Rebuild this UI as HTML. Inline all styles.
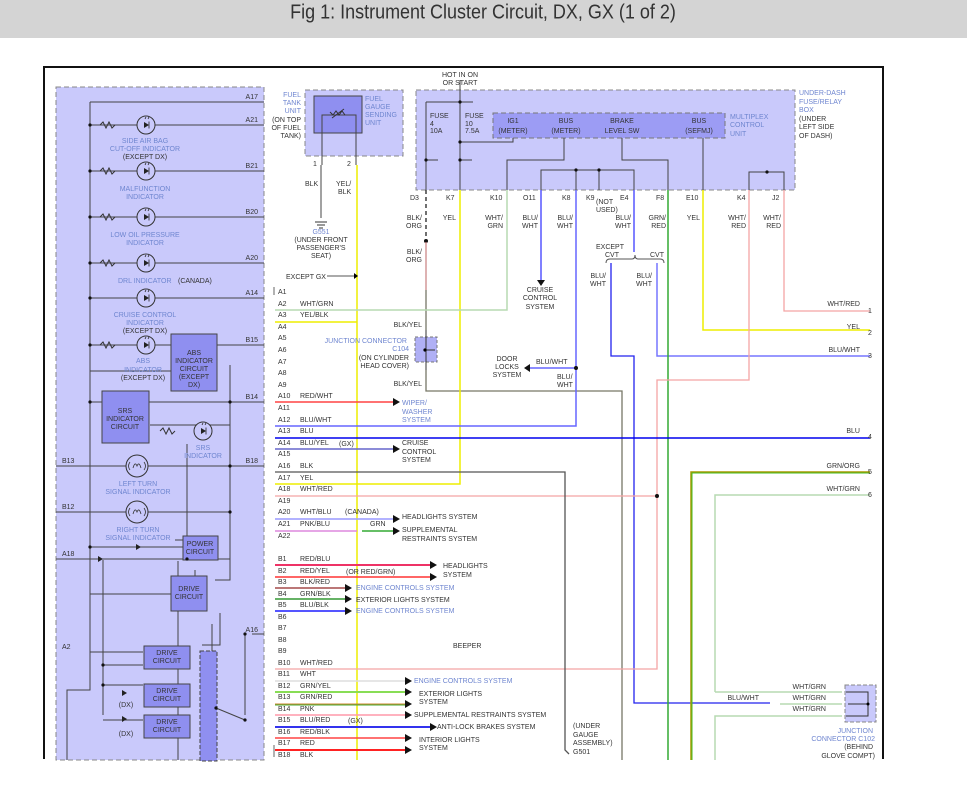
<!DOCTYPE html>
<html><head><meta charset="utf-8"><style>
html,body{margin:0;padding:0;background:#fff;width:967px;height:790px;overflow:hidden}
svg{display:block}
text{font-family:"Liberation Sans",sans-serif;font-size:7px;fill:#333}
.b{fill:#6f86d0}
.t{font-family:"Liberation Sans Narrow","Liberation Sans",sans-serif;font-size:19px;fill:#333}
</style></head><body>
<svg width="967" height="790" viewBox="0 0 967 790">
<defs>
<g id="led"><circle r="9" fill="#c9c9fb" stroke="#333"/><path d="M-2-3v6l5-3z" fill="#222"/><path d="M3-3.5v7M-1-6l1-2M2-6l1-2" stroke="#222" stroke-width="0.8"/></g>
<g id="bulb"><circle r="11" fill="#c9c9fb" stroke="#333"/><path d="M-7-4q-3 4 0 8M7-4q3 4 0 8M-4 2q2-7 4-2q2-5 4 2" stroke="#333" fill="none" stroke-width="0.8"/></g>
</defs>
<rect x="0" y="0" width="967" height="38" fill="#d4d4d4"/>
<text class="t" x="483" y="17" text-anchor="middle" style="font-size:18px" transform="scale(1,1.15) translate(0,-1)">Fig 1: Instrument Cluster Circuit, DX, GX (1 of 2)</text>
<path d="M44 759V67H883V759" fill="none" stroke="#111" stroke-width="2"/>
<rect x="56" y="87" width="208" height="673" fill="#c9c9fb" stroke="#888" stroke-dasharray="5,3"/>
<g stroke="#444" stroke-width="1" fill="none">
<path d="M90 102V690H67V760"/>
<path d="M90 102H264M90 125H264M90 171H264M90 217H264M90 263H264M90 298H264M90 345H171M215 345H264M90 371H171M90 402H264M150 425H230M90 466H264M56 466H90M56 512H230M56 559H230M90 547H183M90 594H172M90 652H143M252 634H264M212 624V760"/>
<path d="M230 365V512M230 402V466M187 444V559M175 540H217M230 512V580H215M195 570V599"/>
<path d="M220 613V645H202M245 634V715M178 561V760"/>
<path d="M103 665H143M103 685H143M103 720H143M103 560V715"/>
<path d="M216 708L245 720"/>
</g>
<use href="#led" x="146" y="125"/><use href="#led" x="146" y="171"/><use href="#led" x="146" y="217"/><use href="#led" x="146" y="263"/><use href="#led" x="146" y="298"/><use href="#led" x="146" y="345"/><use href="#led" x="203" y="431"/>
<use href="#bulb" x="137" y="466"/><use href="#bulb" x="137" y="512"/>
<g stroke="#333" fill="none"><path d="M100 125l3-3 3 6 3-6 3 6 3-3M100 171l3-3 3 6 3-6 3 6 3-3M100 217l3-3 3 6 3-6 3 6 3-3M100 263l3-3 3 6 3-6 3 6 3-3M100 345l3-3 3 6 3-6 3 6 3-3M160 431l3-3 3 6 3-6 3 6 3-3"/></g>
<g fill="#222"><path d="M136 544v6l5-3zM98 556v6l5-3zM122 690v6l5-3zM122 716v6l5-3z"/></g>
<g fill="#8f8ff0" stroke="#444">
<rect x="171" y="334" width="46" height="57"/>
<rect x="102" y="391" width="47" height="52"/>
<rect x="183" y="536" width="35" height="24"/>
<rect x="171" y="576" width="36" height="35"/>
<rect x="144" y="646" width="46" height="23"/>
<rect x="144" y="684" width="46" height="23"/>
<rect x="144" y="715" width="46" height="23"/>
<rect x="200" y="651" width="17" height="110" stroke-dasharray="4,2"/>
</g>
<g text-anchor="middle">
<text x="194" y="355">ABS</text><text x="194" y="363">INDICATOR</text><text x="194" y="371">CIRCUIT</text><text x="194" y="379">(EXCEPT</text><text x="194" y="387">DX)</text>
<text x="125" y="413">SRS</text><text x="125" y="421">INDICATOR</text><text x="125" y="429">CIRCUIT</text>
<text x="200" y="546">POWER</text><text x="200" y="554">CIRCUIT</text>
<text x="189" y="591">DRIVE</text><text x="189" y="599">CIRCUIT</text>
<text x="167" y="655">DRIVE</text><text x="167" y="663">CIRCUIT</text>
<text x="167" y="693">DRIVE</text><text x="167" y="701">CIRCUIT</text>
<text x="167" y="724">DRIVE</text><text x="167" y="732">CIRCUIT</text>
<text class="b" x="145" y="143">SIDE AIR BAG</text><text class="b" x="145" y="151">CUT-OFF INDICATOR</text><text x="145" y="159">(EXCEPT DX)</text>
<text class="b" x="145" y="191">MALFUNCTION</text><text class="b" x="145" y="199">INDICATOR</text>
<text class="b" x="145" y="237">LOW OIL PRESSURE</text><text class="b" x="145" y="245">INDICATOR</text>
<text class="b" x="145" y="317">CRUISE CONTROL</text><text class="b" x="145" y="325">INDICATOR</text><text x="145" y="333">(EXCEPT DX)</text>
<text class="b" x="143" y="363">ABS</text><text class="b" x="143" y="372">INDICATOR</text><text x="143" y="380">(EXCEPT DX)</text>
<text class="b" x="203" y="450">SRS</text><text class="b" x="203" y="458">INDICATOR</text>
<text class="b" x="138" y="486">LEFT TURN</text><text class="b" x="138" y="494">SIGNAL INDICATOR</text>
<text class="b" x="138" y="532">RIGHT TURN</text><text class="b" x="138" y="540">SIGNAL INDICATOR</text>
<text x="126" y="707">(DX)</text><text x="126" y="736">(DX)</text>
</g>
<text class="b" x="118" y="283">DRL INDICATOR</text><text x="178" y="283">(CANADA)</text>
<g text-anchor="end"><text x="258" y="99">A17</text><text x="258" y="122">A21</text><text x="258" y="168">B21</text><text x="258" y="214">B20</text><text x="258" y="260">A20</text><text x="258" y="295">A14</text><text x="258" y="342">B15</text><text x="258" y="399">B14</text><text x="258" y="463">B18</text><text x="258" y="632">A16</text></g>
<text x="62" y="463">B13</text><text x="62" y="509">B12</text><text x="62" y="556">A18</text><text x="62" y="649">A2</text>
<g fill="#111"><circle cx="90" cy="125" r="1.6"/><circle cx="90" cy="171" r="1.6"/><circle cx="90" cy="217" r="1.6"/><circle cx="90" cy="263" r="1.6"/><circle cx="90" cy="298" r="1.6"/><circle cx="90" cy="345" r="1.6"/><circle cx="90" cy="402" r="1.6"/><circle cx="230" cy="402" r="1.6"/><circle cx="230" cy="466" r="1.6"/><circle cx="230" cy="512" r="1.6"/><circle cx="103" cy="665" r="1.6"/><circle cx="103" cy="685" r="1.6"/><circle cx="245" cy="634" r="1.6"/><circle cx="216" cy="708" r="1.6"/><circle cx="245" cy="720" r="1.6"/><circle cx="187" cy="559" r="1.6"/><circle cx="90" cy="547" r="1.6"/></g>

<rect x="305" y="90" width="98" height="66" fill="#c9c9fb" stroke="#888" stroke-dasharray="5,3"/>
<rect x="314" y="96" width="48" height="37" fill="#8f8ff0" stroke="#444"/>
<path d="M322 133V115H356V133M322 133V165M356 133V165M321 165V218" stroke="#444" fill="none"/>
<path d="M330 112l3 3 3-4 3 4 3-4 3 4M332 118l12-9" stroke="#333" fill="none"/>
<path d="M357 165V760" stroke="#ee0" stroke-width="1.5"/>
<path d="M357 322H275" stroke="#ee0" stroke-width="1.5"/>
<path d="M315 222h12M317 225h8M319 228h4" stroke="#333"/>
<g text-anchor="end"><text x="301" y="97" class="b">FUEL</text><text x="301" y="105" class="b">TANK</text><text x="301" y="113" class="b">UNIT</text><text x="301" y="122">(ON TOP</text><text x="301" y="130">OF FUEL</text><text x="301" y="138">TANK)</text></g>
<text class="b" x="365" y="101">FUEL</text><text class="b" x="365" y="109">GAUGE</text><text class="b" x="365" y="117">SENDING</text><text class="b" x="365" y="125">UNIT</text>
<text x="313" y="166">1</text><text x="347" y="166">2</text>
<text x="305" y="186">BLK</text><text x="336" y="186">YEL/</text><text x="338" y="194">BLK</text>
<g text-anchor="middle"><text class="b" x="321" y="234">G551</text><text x="321" y="242">(UNDER FRONT</text><text x="321" y="250">PASSENGER'S</text><text x="321" y="258">SEAT)</text></g>
<text x="286" y="279">EXCEPT GX</text><path d="M327 276H354" stroke="#555"/><path d="M354 273l4 3-4 3z"/>

<rect x="416" y="90" width="379" height="100" fill="#c9c9fb" stroke="#888" stroke-dasharray="5,3"/>
<rect x="493" y="113" width="232" height="25" fill="#9c9cf4" stroke="#777" stroke-dasharray="5,3"/>
<g stroke="#444" fill="none">
<path d="M460 80V190M426 102H473M426 102V190M460 142H513V138M426 160H438M460 160H472M507 190V160H564V138M541 190V170H634V190M576 170V190M599 170V190M622 138V160H668V190M703 138V190M749 190V172H784V190"/>
</g>
<g fill="#111"><circle cx="460" cy="102" r="1.6"/><circle cx="460" cy="142" r="1.6"/><circle cx="460" cy="160" r="1.6"/><circle cx="426" cy="160" r="1.6"/><circle cx="576" cy="170" r="1.6"/><circle cx="599" cy="170" r="1.6"/><circle cx="767" cy="172" r="1.6"/><circle cx="426" cy="241" r="2"/></g>
<text x="430" y="118">FUSE</text><text x="430" y="126">4</text><text x="430" y="133">10A</text>
<text x="465" y="118">FUSE</text><text x="465" y="126">10</text><text x="465" y="133">7.5A</text>
<g text-anchor="middle"><text x="513" y="123">IG1</text><text x="513" y="133">(METER)</text><text x="566" y="123">BUS</text><text x="566" y="133">(METER)</text><text x="622" y="123">BRAKE</text><text x="622" y="133">LEVEL SW</text><text x="699" y="123">BUS</text><text x="699" y="133">(SEFMJ)</text>
<text x="460" y="77">HOT IN ON</text><text x="460" y="85">OR START</text></g>
<text class="b" x="730" y="119">MULTIPLEX</text><text class="b" x="730" y="127">CONTROL</text><text class="b" x="730" y="136">UNIT</text>
<text class="b" x="799" y="95">UNDER-DASH</text><text class="b" x="799" y="104">FUSE/RELAY</text><text class="b" x="799" y="112">BOX</text><text x="799" y="121">(UNDER</text><text x="799" y="129">LEFT SIDE</text><text x="799" y="138">OF DASH)</text>
<g font-size="7"><text x="410" y="200">D3</text><text x="446" y="200">K7</text><text x="490" y="200">K10</text><text x="523" y="200">O11</text><text x="562" y="200">K8</text><text x="586" y="200">K9</text><text x="620" y="200">E4</text><text x="656" y="200">F8</text><text x="686" y="200">E10</text><text x="737" y="200">K4</text><text x="772" y="200">J2</text>
<text x="596" y="204">(NOT</text><text x="596" y="212">USED)</text></g>
<g text-anchor="end"><text x="422" y="220">BLK/</text><text x="422" y="228">ORG</text><text x="456" y="220">YEL</text><text x="503" y="220">WHT/</text><text x="503" y="228">GRN</text><text x="538" y="220">BLU/</text><text x="538" y="228">WHT</text><text x="573" y="220">BLU/</text><text x="573" y="228">WHT</text><text x="631" y="220">BLU/</text><text x="631" y="228">WHT</text><text x="666" y="220">GRN/</text><text x="666" y="228">RED</text><text x="700" y="220">YEL</text><text x="746" y="220">WHT/</text><text x="746" y="228">RED</text><text x="781" y="220">WHT/</text><text x="781" y="228">RED</text>
<text x="422" y="254">BLK/</text><text x="422" y="262">ORG</text><text x="422" y="327">BLK/YEL</text><text x="422" y="386">BLK/YEL</text>
<text x="606" y="278">BLU/</text><text x="606" y="286">WHT</text><text x="652" y="278">BLU/</text><text x="652" y="286">WHT</text></g>
<g text-anchor="middle"><text x="540" y="292">CRUISE</text><text x="540" y="300">CONTROL</text><text x="540" y="309">SYSTEM</text><text x="610" y="249">EXCEPT</text><text x="612" y="257">CVT</text><text x="657" y="257">CVT</text>
<text x="507" y="361">DOOR</text><text x="507" y="369">LOCKS</text><text x="507" y="377">SYSTEM</text></g>
<text x="536" y="364">BLU/WHT</text><text x="557" y="379">BLU/</text><text x="557" y="387">WHT</text>
<path d="M606 263q0-4 4-4h22q3 0 3-4q0 4 3 4h22q4 0 4 4" stroke="#555" fill="none"/>
<rect x="415" y="337" width="22" height="25" fill="#b0b0f5" stroke="#777" stroke-dasharray="3,2"/>
<path d="M426 330V370M426 350H435" stroke="#333"/><circle cx="425" cy="350" r="1.6"/>
<g text-anchor="end"><text class="b" x="407" y="343">JUNCTION CONNECTOR</text><text class="b" x="409" y="351">C104</text><text x="409" y="360">(ON CYLINDER</text><text x="409" y="368">HEAD COVER)</text></g>

<g fill="none">
<path d="M426 190V240" stroke="#222" stroke-dasharray="4,3" stroke-width="1.3"/>
<path d="M426 242V290" stroke="#c88" stroke-width="1.3"/>
<path d="M426 290V330M426 370V391H622V760" stroke="#776" stroke-width="1.3"/>
<path d="M460 190V484H275" stroke="#ee0" stroke-width="1.5"/>
<path d="M507 190V310H275" stroke="#b7dab2" stroke-width="1.5"/>
<path d="M541 190V280" stroke="#55f" stroke-width="1.5"/>
<path d="M576 190V426H275" stroke="#66f" stroke-width="1.5"/>
<path d="M576 368H530" stroke="#66f" stroke-width="1.5"/>
<path d="M634 190V252" stroke="#55f" stroke-width="1.5"/>
<path d="M611 263V356H634V703H770" stroke="#22e" stroke-width="1.3"/>
<path d="M657 263V356H870" stroke="#77f" stroke-width="1.5"/>
<path d="M668 190V760" stroke="#3a3" stroke-width="1.5"/>
<path d="M703 190V330H870" stroke="#ee0" stroke-width="1.5"/>
<path d="M749 190V380H657V669H275" stroke="#f4a5a5" stroke-width="1.3"/>
<path d="M657 496H275" stroke="#f4a5a5" stroke-width="1.3"/>
<path d="M784 190V311H870" stroke="#f4a5a5" stroke-width="1.3"/>
<path d="M275 438H870" stroke="#00e" stroke-width="1.5"/>
<path d="M275 472H565V750l4 4" stroke="#555" stroke-width="1.3"/>
<path d="M691 760V472H870" stroke="#a90" stroke-width="1.5"/><path d="M692 760V473H870" stroke="#4b2" stroke-width="1"/>
<path d="M715 692V495H870M715 760V716H842M780 704H842M715 692H842" stroke="#b7dab2" stroke-width="1.5"/>
<path d="M275 402H393" stroke="#f44" stroke-width="1.5"/>
<path d="M275 449H393" stroke="#66c" stroke-width="1.5"/>
<path d="M275 519H393" stroke="#99f" stroke-width="1.5"/>
<path d="M275 531H357" stroke="#d8d" stroke-width="1.5"/><path d="M362 531H393" stroke="#3a3" stroke-width="1.5"/>
<path d="M275 565H430" stroke="#e36" stroke-width="2"/>
<path d="M275 577H430" stroke="#f33" stroke-width="1.5"/>
<path d="M275 588H345" stroke="#b77" stroke-width="2"/>
<path d="M275 599H345" stroke="#393" stroke-width="1.5"/>
<path d="M275 611H345" stroke="#55f" stroke-width="2"/>
<path d="M275 681H405" stroke="#ddd" stroke-width="1.5"/>
<path d="M275 692H405" stroke="#8d5" stroke-width="2"/>
<path d="M275 704H405" stroke="#c83" stroke-width="1"/><path d="M275 705H405" stroke="#4a3" stroke-width="1"/>
<path d="M275 715H405" stroke="#f9a" stroke-width="1.5"/>
<path d="M275 727H430" stroke="#33e" stroke-width="2"/>
<path d="M275 738H405" stroke="#f44" stroke-width="1.5"/>
<path d="M275 750H405" stroke="#f22" stroke-width="2"/>
</g>
<g fill="#111">
<path d="M393 398l7 4-7 4zM393 445l7 4-7 4zM393 515l7 4-7 4zM393 527l7 4-7 4zM430 561l7 4-7 4zM430 573l7 4-7 4zM345 584l7 4-7 4zM345 595l7 4-7 4zM345 607l7 4-7 4zM405 677l7 4-7 4zM405 688l7 4-7 4zM405 700l7 4-7 4zM405 711l7 4-7 4zM430 723l7 4-7 4zM405 734l7 4-7 4zM405 746l7 4-7 4zM537 280l4 6 4-6zM530 364l-6 4 6 4z"/>
<circle cx="576" cy="368" r="2"/><circle cx="657" cy="496" r="2"/>
</g>
<g font-size="6.5">
<text x="278" y="294">A1</text><text x="278" y="306">A2</text><text x="278" y="317">A3</text><text x="278" y="329">A4</text><text x="278" y="340">A5</text><text x="278" y="352">A6</text><text x="278" y="364">A7</text><text x="278" y="375">A8</text><text x="278" y="387">A9</text><text x="278" y="398">A10</text><text x="278" y="410">A11</text><text x="278" y="422">A12</text><text x="278" y="433">A13</text><text x="278" y="445">A14</text><text x="278" y="456">A15</text><text x="278" y="468">A16</text><text x="278" y="480">A17</text><text x="278" y="491">A18</text><text x="278" y="503">A19</text><text x="278" y="514">A20</text><text x="278" y="526">A21</text><text x="278" y="538">A22</text>
<text x="278" y="561">B1</text><text x="278" y="573">B2</text><text x="278" y="584">B3</text><text x="278" y="596">B4</text><text x="278" y="607">B5</text><text x="278" y="619">B6</text><text x="278" y="630">B7</text><text x="278" y="642">B8</text><text x="278" y="653">B9</text><text x="278" y="665">B10</text><text x="278" y="676">B11</text><text x="278" y="688">B12</text><text x="278" y="699">B13</text><text x="278" y="711">B14</text><text x="278" y="722">B15</text><text x="278" y="734">B16</text><text x="278" y="745">B17</text><text x="278" y="757">B18</text>
<text x="300" y="306">WHT/GRN</text><text x="300" y="317">YEL/BLK</text><text x="300" y="398">RED/WHT</text><text x="300" y="422">BLU/WHT</text><text x="300" y="433">BLU</text><text x="300" y="445">BLU/YEL</text><text x="339" y="446">(GX)</text><text x="300" y="468">BLK</text><text x="300" y="480">YEL</text><text x="300" y="491">WHT/RED</text><text x="300" y="514">WHT/BLU</text><text x="345" y="514">(CANADA)</text><text x="300" y="526">PNK/BLU</text><text x="370" y="526">GRN</text>
<text x="300" y="561">RED/BLU</text><text x="300" y="573">RED/YEL</text><text x="346" y="574">(OR RED/GRN)</text><text x="300" y="584">BLK/RED</text><text x="300" y="596">GRN/BLK</text><text x="300" y="607">BLU/BLK</text><text x="300" y="665">WHT/RED</text><text x="300" y="676">WHT</text><text x="300" y="688">GRN/YEL</text><text x="300" y="699">GRN/RED</text><text x="300" y="711">PNK</text><text x="300" y="722">BLU/RED</text><text x="348" y="723">(GX)</text><text x="300" y="734">RED/BLK</text><text x="300" y="745">RED</text><text x="300" y="757">BLK</text>
</g>
<text class="b" x="402" y="405">WIPER/</text><text class="b" x="402" y="414">WASHER</text><text class="b" x="402" y="422">SYSTEM</text>
<text x="402" y="445">CRUISE</text><text x="402" y="454">CONTROL</text><text x="402" y="462">SYSTEM</text>
<text x="402" y="519">HEADLIGHTS SYSTEM</text><text x="402" y="532">SUPPLEMENTAL</text><text x="402" y="541">RESTRAINTS SYSTEM</text>
<text x="443" y="568">HEADLIGHTS</text><text x="443" y="577">SYSTEM</text>
<text class="b" x="356" y="590">ENGINE CONTROLS SYSTEM</text><text x="356" y="602">EXTERIOR LIGHTS SYSTEM</text><text class="b" x="356" y="613">ENGINE CONTROLS SYSTEM</text>
<text x="453" y="648">BEEPER</text>
<text class="b" x="414" y="683">ENGINE CONTROLS SYSTEM</text><text x="419" y="696">EXTERIOR LIGHTS</text><text x="419" y="704">SYSTEM</text><text x="414" y="717">SUPPLEMENTAL RESTRAINTS SYSTEM</text><text x="437" y="729">ANTI-LOCK BRAKES SYSTEM</text><text x="419" y="742">INTERIOR LIGHTS</text><text x="419" y="750">SYSTEM</text>
<text x="573" y="728">(UNDER</text><text x="573" y="737">GAUGE</text><text x="573" y="745">ASSEMBLY)</text><text x="573" y="754">G501</text>
<g text-anchor="end"><text x="860" y="306">WHT/RED</text><text x="860" y="329">YEL</text><text x="860" y="352">BLU/WHT</text><text x="860" y="433">BLU</text><text x="860" y="468">GRN/ORG</text><text x="860" y="491">WHT/GRN</text>
<text x="826" y="689">WHT/GRN</text><text x="826" y="700">WHT/GRN</text><text x="826" y="711">WHT/GRN</text><text x="759" y="700">BLU/WHT</text>
<text class="b" x="873" y="733">JUNCTION</text><text class="b" x="875" y="741">CONNECTOR C102</text><text x="873" y="749">(BEHIND</text><text x="875" y="758">GLOVE COMPT)</text></g>
<text x="868" y="313">1</text><text x="868" y="335">2</text><text x="868" y="358">3</text><text x="868" y="439">4</text><text x="868" y="474">5</text><text x="868" y="497">6</text>
<rect x="845" y="685" width="31" height="37" fill="#c9c9fb" stroke="#888" stroke-dasharray="4,2"/>
<path d="M846 692H868V716H846M868 704H848" stroke="#333" fill="none"/><circle cx="868" cy="704" r="1.5"/>
<g fill="none" stroke="#666"><path d="M274 287v8M274 745v12"/></g>
</svg>
</body></html>
